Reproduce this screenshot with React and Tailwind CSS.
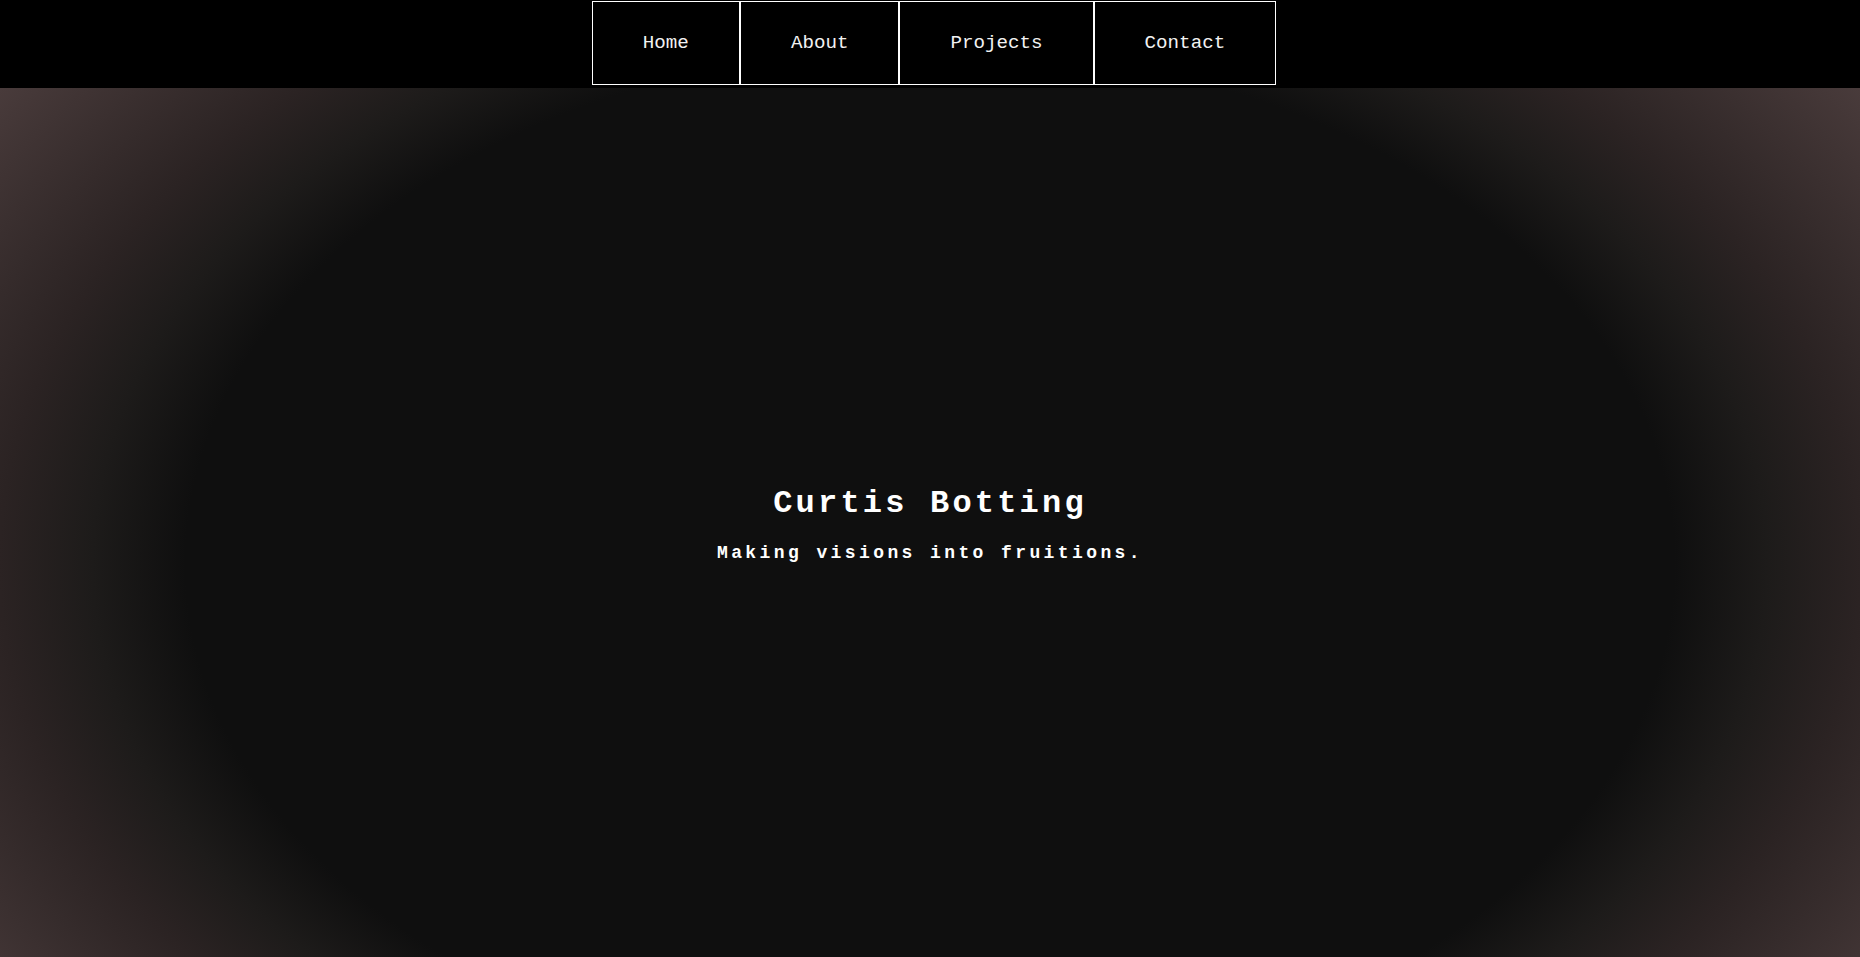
import React from 'react';

const links = ['Home', 'About', 'Projects', 'Contact'];

const App = () => {
    return (
        <div className="min-h-screen bg-[#0f0f0f] font-['Courier_New','Nimbus_Mono_PS','FreeMono','Liberation_Mono',monospace] text-white">
            {/* Nav */}
            <nav className="h-[88px] bg-black flex justify-center pt-px pl-[8px]">
                <ul className="flex h-[84px]">
                    {links.map(link => (
                        <li key={link} className="border border-white flex items-center pt-[2px] px-[50px] text-[19.2px] leading-none text-[#f2f2f2]">
                            <a href="#">{link}</a>
                        </li>
                    ))}
                </ul>
            </nav>

            {/* Hero */}
            <section className="h-[869px] flex flex-col items-center justify-center gap-5 pt-[5px] bg-[radial-gradient(ellipse_1163px_807px_at_50%_476px,#0f0f0f_64%,#1d1b1a_72%,#2b2323_80%,#4a3c3c_100%)]">
                <h1 className="text-[32px] leading-[1.2] font-bold tracking-[0.1em]">Curtis Botting</h1>
                <p className="text-[18px] leading-[1.2] font-bold tracking-[3.4px]">Making visions into fruitions.</p>
            </section>
        </div>
    );
};

export default App;
